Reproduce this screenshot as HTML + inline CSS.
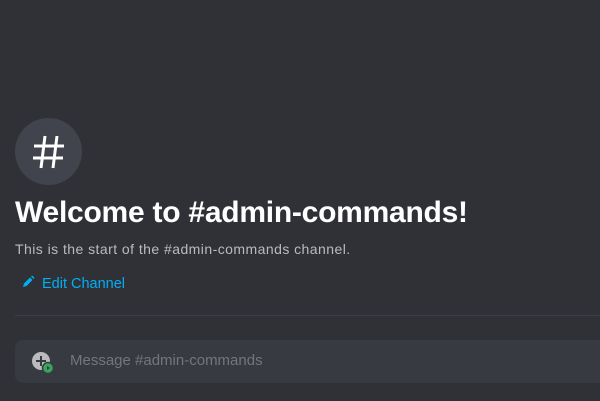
<!DOCTYPE html>
<html><head><style>
body{margin:0;width:600px;height:401px;background:#2f3136;font-family:"Liberation Sans",sans-serif;position:relative;overflow:hidden}
.c{position:absolute;left:15px;top:118px;width:67px;height:67px;border-radius:50%;background:#41444c}
h1{position:absolute;left:15px;top:196px;margin:0;font-size:30px;font-weight:bold;color:#fff;letter-spacing:-0.25px;white-space:nowrap}
.s{position:absolute;left:15px;top:241px;font-size:14px;letter-spacing:0.45px;color:#b9bbbe}
.e{position:absolute;left:21px;top:275px;font-size:14.5px;color:#00aff4}
.d{position:absolute;left:15px;right:0;top:315px;height:1px;background:#3a3d43}
.i{position:absolute;left:15px;right:0;top:340px;height:43px;background:#383a42;border-radius:8px 0 0 8px}
.p{position:absolute;left:70px;top:352px;font-size:15px;color:#72767d}
</style></head><body>
<div class="c"><svg width="67" height="67" viewBox="0 0 67 67"><g stroke="#fff" stroke-width="3" fill="none"><path d="M30 18 L26 50 M42 18 L38 50 M19 28 H49 M18 40 H48"/></g></svg></div>
<h1>Welcome to #admin-commands!</h1>
<div class="s">This is the start of the #admin-commands channel.</div>
<div class="e"><svg width="14" height="14" viewBox="0 0 14 14" style="vertical-align:-1px;margin-right:7px"><path d="M2 12 L3 8.5 L9 2.5 L11.5 5 L5.5 11 Z" fill="#00aff4"/><path d="M10 1.5 L11.2 0.5 L13.5 2.8 L12.5 4Z" fill="#00aff4"/></svg>Edit Channel</div>
<div class="d"></div>
<div class="i"></div>
<svg style="position:absolute;left:31px;top:351px" width="26" height="24" viewBox="0 0 26 24"><circle cx="10" cy="10" r="9" fill="#b9bbbe"/><path d="M10 5v10M5 10h10" stroke="#383a42" stroke-width="2"/><circle cx="17" cy="17" r="5.5" fill="#3ba55c" stroke="#383a42" stroke-width="1.5"/><path d="M16 15v4l3-2z" fill="#1e4d2b"/></svg>
<div class="p">Message #admin-commands</div>
</body></html>
